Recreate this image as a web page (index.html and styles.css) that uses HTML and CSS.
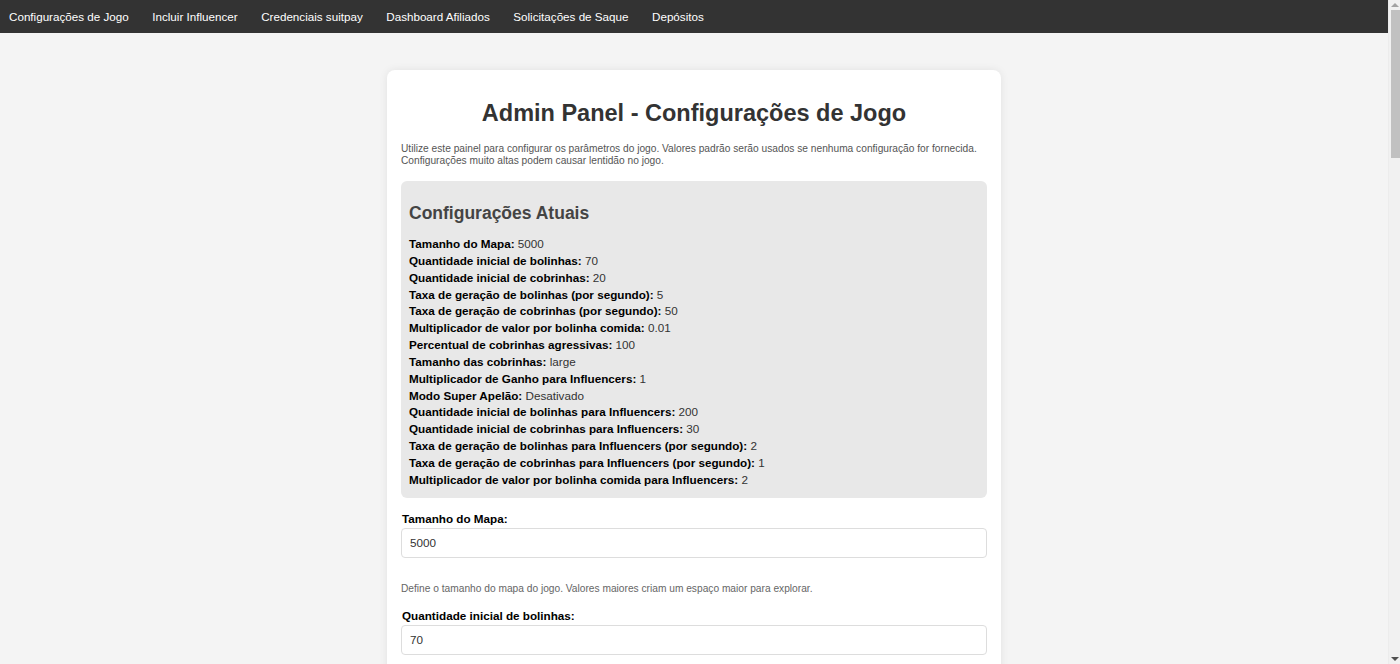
FILE: index.html
```html
<!DOCTYPE html>
<html lang="pt-BR">
<head>
<meta charset="utf-8">
<title>Admin Panel - Configurações de Jogo</title>
<link rel="stylesheet" href="styles.css">
</head>
<body>
<div class="window">
<div class="page">
<nav class="navbar">
  <a href="#">Configurações de Jogo</a>
  <a href="#">Incluir Influencer</a>
  <a href="#">Credenciais suitpay</a>
  <a href="#">Dashboard Afiliados</a>
  <a href="#">Solicitações de Saque</a>
  <a href="#">Depósitos</a>
</nav>
<main class="container">
  <h1 class="title">Admin Panel - Configurações de Jogo</h1>
  <p class="intro">Utilize este painel para configurar os parâmetros do jogo. Valores padrão serão usados se nenhuma configuração for fornecida. Configurações muito altas podem causar lentidão no jogo.</p>
  <section class="current">
    <h3>Configurações Atuais</h3>
    <p><strong>Tamanho do Mapa:</strong> 5000</p>
    <p><strong>Quantidade inicial de bolinhas:</strong> 70</p>
    <p><strong>Quantidade inicial de cobrinhas:</strong> 20</p>
    <p><strong>Taxa de geração de bolinhas (por segundo):</strong> 5</p>
    <p><strong>Taxa de geração de cobrinhas (por segundo):</strong> 50</p>
    <p><strong>Multiplicador de valor por bolinha comida:</strong> 0.01</p>
    <p><strong>Percentual de cobrinhas agressivas:</strong> 100</p>
    <p><strong>Tamanho das cobrinhas:</strong> large</p>
    <p><strong>Multiplicador de Ganho para Influencers:</strong> 1</p>
    <p><strong>Modo Super Apelão:</strong> Desativado</p>
    <p><strong>Quantidade inicial de bolinhas para Influencers:</strong> 200</p>
    <p><strong>Quantidade inicial de cobrinhas para Influencers:</strong> 30</p>
    <p><strong>Taxa de geração de bolinhas para Influencers (por segundo):</strong> 2</p>
    <p><strong>Taxa de geração de cobrinhas para Influencers (por segundo):</strong> 1</p>
    <p><strong>Multiplicador de valor por bolinha comida para Influencers:</strong> 2</p>
  </section>
  <form class="form">
    <div class="group">
      <label>Tamanho do Mapa:</label>
      <input type="text" value="5000">
      <p class="hint">Define o tamanho do mapa do jogo. Valores maiores criam um espaço maior para explorar.</p>
    </div>
    <div class="group">
      <label>Quantidade inicial de bolinhas:</label>
      <input type="text" value="70">
      <p class="hint">Número de bolinhas presentes no mapa no início do jogo.</p>
    </div>
    <div class="group">
      <label>Quantidade inicial de cobrinhas:</label>
      <input type="text" value="20">
      <p class="hint">Número de cobrinhas controladas pelo computador no início do jogo.</p>
    </div>
    <div class="group">
      <label>Taxa de geração de bolinhas (por segundo):</label>
      <input type="text" value="5">
      <p class="hint">Quantidade de novas bolinhas geradas a cada segundo.</p>
    </div>
    <div class="group">
      <label>Taxa de geração de cobrinhas (por segundo):</label>
      <input type="text" value="50">
      <p class="hint">Quantidade de novas cobrinhas geradas a cada segundo.</p>
    </div>
    <div class="group">
      <label>Multiplicador de valor por bolinha comida:</label>
      <input type="text" value="0.01">
      <p class="hint">Valor ganho por cada bolinha comida.</p>
    </div>
    <div class="group">
      <label>Percentual de cobrinhas agressivas:</label>
      <input type="text" value="100">
      <p class="hint">Percentual de cobrinhas que atacam o jogador.</p>
    </div>
    <div class="group">
      <label>Tamanho das cobrinhas:</label>
      <input type="text" value="large">
      <p class="hint">Tamanho inicial das cobrinhas controladas pelo computador.</p>
    </div>
    <div class="group">
      <label>Multiplicador de Ganho para Influencers:</label>
      <input type="text" value="1">
      <p class="hint">Multiplicador aplicado aos ganhos dos influencers.</p>
    </div>
    <div class="group">
      <label>Modo Super Apelão:</label>
      <input type="text" value="Desativado">
      <p class="hint">Ativa ou desativa o modo Super Apelão.</p>
    </div>
    <div class="group">
      <label>Quantidade inicial de bolinhas para Influencers:</label>
      <input type="text" value="200">
      <p class="hint">Número de bolinhas no início do jogo para influencers.</p>
    </div>
    <div class="group">
      <label>Quantidade inicial de cobrinhas para Influencers:</label>
      <input type="text" value="30">
      <p class="hint">Número de cobrinhas no início do jogo para influencers.</p>
    </div>
    <div class="group">
      <label>Taxa de geração de bolinhas para Influencers (por segundo):</label>
      <input type="text" value="2">
      <p class="hint">Bolinhas geradas por segundo para influencers.</p>
    </div>
    <div class="group">
      <label>Taxa de geração de cobrinhas para Influencers (por segundo):</label>
      <input type="text" value="1">
      <p class="hint">Cobrinhas geradas por segundo para influencers.</p>
    </div>
    <div class="group">
      <label>Multiplicador de valor por bolinha comida para Influencers:</label>
      <input type="text" value="2">
      <p class="hint">Valor ganho por bolinha comida para influencers.</p>
    </div>
    <button type="button" class="save">Salvar Configurações</button>
  </form>
</main>
</div>
<div class="scrollbar" aria-hidden="true">
  <span class="arrow up"></span>
  <span class="thumb"></span>
  <span class="track"></span>
  <span class="arrow down"></span>
</div>
</div>
</body>
</html>
```
FILE: styles.css
```css
html, body {
  margin: 0;
  padding: 0;
  height: 100%;
  overflow: hidden;
}
body {
  background: #f4f4f4;
  font-family: "Liberation Sans", Arial, sans-serif;
  color: #333;
}
.window {
  display: flex;
  height: 100vh;
}
.page {
  flex: 1;
  min-width: 0;
  height: 100vh;
  overflow: hidden;
}
.scrollbar {
  width: 12px;
  flex: none;
  display: flex;
  flex-direction: column;
  align-items: center;
  background: #f1f1f1;
  border-left: 1px solid #ececec;
  box-sizing: border-box;
}
.arrow {
  width: 0;
  height: 0;
  border-left: 4px solid transparent;
  border-right: 4px solid transparent;
  flex: none;
}
.arrow.up {
  margin-top: 3px;
  border-bottom: 4px solid #a3a3a3;
}
.arrow.down {
  margin-bottom: 3px;
  border-top: 4px solid #505050;
}
.thumb {
  width: 9px;
  height: 148px;
  margin-top: 3px;
  margin-left: 2px;
  background: #c1c1c1;
  flex: none;
}
.track {
  flex: 1;
}
.navbar {
  display: flex;
  gap: 23.5px;
  height: 33px;
  align-items: center;
  padding-left: 9px;
  background: #333;
}
.navbar a {
  color: #fff;
  text-decoration: none;
  font-size: 11.65px;
}
.container {
  width: 614px;
  box-sizing: border-box;
  margin: 37px auto 40px;
  padding: 14px;
  background: #fff;
  border-radius: 8px;
  box-shadow: 0 0 8px rgba(0, 0, 0, 0.08);
}
.title {
  text-align: center;
  font-size: 23.5px;
  line-height: 28px;
  margin: 15px 0 16px;
  color: #333;
}
.intro {
  font-size: 10.2px;
  line-height: 12px;
  color: #555;
  margin: 0 0 14px;
}
.current {
  background: #e8e8e8;
  border-radius: 6px;
  padding: 8px 8px 9px;
}
.current h3 {
  font-size: 17.5px;
  line-height: 21px;
  margin: 14px 0 12px;
  color: #444;
}
.current p {
  margin: 0;
  font-size: 11.7px;
  line-height: 16.85px;
  color: #333;
}
.current strong {
  color: #000;
}
.form {
  margin-top: 13px;
}
.group label {
  display: block;
  font-size: 11.7px;
  line-height: 15px;
  font-weight: bold;
  color: #000;
  padding-left: 1px;
  margin-bottom: 2px;
}
.group input {
  display: block;
  width: 100%;
  box-sizing: border-box;
  height: 30px;
  padding: 0 8px;
  border: 1px solid #ddd;
  border-radius: 4px;
  font-family: inherit;
  font-size: 11.7px;
  color: #333;
  margin: 0 0 25px;
}
.group .hint {
  font-size: 10.2px;
  line-height: 12px;
  color: #666;
  margin: 0 0 13px;
}
.save {
  display: block;
  width: 100%;
  height: 36px;
  border: none;
  border-radius: 4px;
  background: #333;
  color: #fff;
  font-family: inherit;
  font-size: 14px;
}
```
